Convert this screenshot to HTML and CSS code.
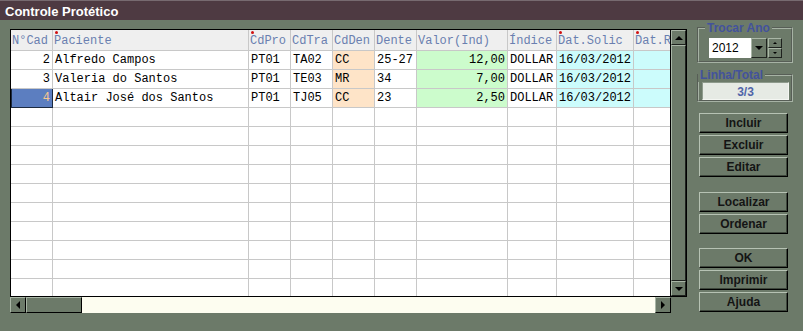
FILE: index.html
```html
<!DOCTYPE html>
<html lang="pt">
<head>
  <meta charset="UTF-8" />
  <title>Controle Protético</title>
  <link rel="stylesheet" href="styles.css">
</head>
<body>
  <div class="window">
    <div class="titlebar">Controle Protético</div>
    <div class="main">
      <div class="grid-area">
        <div class="grid-row">
          <div class="table-wrap">
            <div class="row head">
              <div class="cell">N°Cad</div>
              <div class="cell req">Paciente</div>
              <div class="cell req">CdPro</div>
              <div class="cell">CdTra</div>
              <div class="cell">CdDen</div>
              <div class="cell">Dente</div>
              <div class="cell">Valor(Ind)</div>
              <div class="cell">Índice</div>
              <div class="cell req">Dat.Solic</div>
              <div class="cell req">Dat.Ret</div>
            </div>
            <div class="row">
              <div class="cell num">2</div>
              <div class="cell">Alfredo Campos</div>
              <div class="cell">PT01</div>
              <div class="cell">TA02</div>
              <div class="cell peach">CC</div>
              <div class="cell">25-27</div>
              <div class="cell num green">12,00</div>
              <div class="cell">DOLLAR</div>
              <div class="cell cyan">16/03/2012</div>
              <div class="cell cyan"></div>
            </div>
            <div class="row">
              <div class="cell num">3</div>
              <div class="cell">Valeria do Santos</div>
              <div class="cell">PT01</div>
              <div class="cell">TE03</div>
              <div class="cell peach">MR</div>
              <div class="cell">34</div>
              <div class="cell num green">7,00</div>
              <div class="cell">DOLLAR</div>
              <div class="cell cyan">16/03/2012</div>
              <div class="cell cyan"></div>
            </div>
            <div class="row">
              <div class="cell num selected">4</div>
              <div class="cell">Altair José dos Santos</div>
              <div class="cell">PT01</div>
              <div class="cell">TJ05</div>
              <div class="cell peach">CC</div>
              <div class="cell">23</div>
              <div class="cell num green">2,50</div>
              <div class="cell">DOLLAR</div>
              <div class="cell cyan">16/03/2012</div>
              <div class="cell cyan"></div>
            </div>
            <div class="row"><div class="cell"></div><div class="cell"></div><div class="cell"></div><div class="cell"></div><div class="cell"></div><div class="cell"></div><div class="cell"></div><div class="cell"></div><div class="cell"></div><div class="cell"></div></div>
            <div class="row"><div class="cell"></div><div class="cell"></div><div class="cell"></div><div class="cell"></div><div class="cell"></div><div class="cell"></div><div class="cell"></div><div class="cell"></div><div class="cell"></div><div class="cell"></div></div>
            <div class="row"><div class="cell"></div><div class="cell"></div><div class="cell"></div><div class="cell"></div><div class="cell"></div><div class="cell"></div><div class="cell"></div><div class="cell"></div><div class="cell"></div><div class="cell"></div></div>
            <div class="row"><div class="cell"></div><div class="cell"></div><div class="cell"></div><div class="cell"></div><div class="cell"></div><div class="cell"></div><div class="cell"></div><div class="cell"></div><div class="cell"></div><div class="cell"></div></div>
            <div class="row"><div class="cell"></div><div class="cell"></div><div class="cell"></div><div class="cell"></div><div class="cell"></div><div class="cell"></div><div class="cell"></div><div class="cell"></div><div class="cell"></div><div class="cell"></div></div>
            <div class="row"><div class="cell"></div><div class="cell"></div><div class="cell"></div><div class="cell"></div><div class="cell"></div><div class="cell"></div><div class="cell"></div><div class="cell"></div><div class="cell"></div><div class="cell"></div></div>
            <div class="row"><div class="cell"></div><div class="cell"></div><div class="cell"></div><div class="cell"></div><div class="cell"></div><div class="cell"></div><div class="cell"></div><div class="cell"></div><div class="cell"></div><div class="cell"></div></div>
            <div class="row"><div class="cell"></div><div class="cell"></div><div class="cell"></div><div class="cell"></div><div class="cell"></div><div class="cell"></div><div class="cell"></div><div class="cell"></div><div class="cell"></div><div class="cell"></div></div>
            <div class="row"><div class="cell"></div><div class="cell"></div><div class="cell"></div><div class="cell"></div><div class="cell"></div><div class="cell"></div><div class="cell"></div><div class="cell"></div><div class="cell"></div><div class="cell"></div></div>
            <div class="row"><div class="cell"></div><div class="cell"></div><div class="cell"></div><div class="cell"></div><div class="cell"></div><div class="cell"></div><div class="cell"></div><div class="cell"></div><div class="cell"></div><div class="cell"></div></div>
            <div class="row"><div class="cell"></div><div class="cell"></div><div class="cell"></div><div class="cell"></div><div class="cell"></div><div class="cell"></div><div class="cell"></div><div class="cell"></div><div class="cell"></div><div class="cell"></div></div>
          </div>
          <div class="vscroll">
            <div class="sbtn"><span class="arrow up"></span></div>
            <div class="thumb"></div>
            <div class="sbtn"><span class="arrow down"></span></div>
          </div>
        </div>
        <div class="hscroll">
          <div class="sbtn"><span class="arrow left"></span></div>
          <div class="hthumb"></div>
          <div class="track"></div>
          <div class="sbtn"><span class="arrow right"></span></div>
        </div>
      </div>

      <div class="panel">
        <fieldset class="group">
          <legend>Trocar Ano</legend>
          <div class="year-row">
            <div class="combo">2012</div>
            <div class="combo-btn"><span class="arrow down"></span></div>
            <div class="spin">
              <div class="spin-btn"><span class="arrow tiny-up"></span></div>
              <div class="spin-btn"><span class="arrow tiny-down"></span></div>
            </div>
          </div>
        </fieldset>
        <fieldset class="group total">
          <legend>Linha/Total</legend>
          <div class="counter">3/3</div>
        </fieldset>
        <div class="buttons first">
          <button class="btn">Incluir</button>
          <button class="btn">Excluir</button>
          <button class="btn">Editar</button>
        </div>
        <div class="buttons second">
          <button class="btn">Localizar</button>
          <button class="btn">Ordenar</button>
        </div>
        <div class="buttons">
          <button class="btn">OK</button>
          <button class="btn">Imprimir</button>
          <button class="btn">Ajuda</button>
        </div>
      </div>
    </div>
  </div>
</body>
</html>
```

FILE: styles.css
```css
body {
  margin: 0;
  font-family: "Liberation Sans", Arial, sans-serif;
  background-color: #6c7a69;
  width: 803px;
  height: 331px;
  overflow: hidden;
}
.window {
  display: flex;
  flex-direction: column;
  height: 331px;
}
.titlebar {
  height: 20px;
  line-height: 21px;
  background-color: #4e3a42;
  border-top: 1px solid #776a70;
  box-sizing: border-box;
  color: #fff;
  font-weight: bold;
  font-size: 13px;
  padding-left: 5px;
}
.main {
  display: flex;
  gap: 10px;
  padding: 1px 0 0 10px;
}
.grid-area {
  margin-top: 8px;
  width: 677px;
}
.grid-row {
  display: flex;
  height: 268px;
}
.table-wrap {
  width: 661px;
  height: 268px;
  border: 1px solid #000;
  box-sizing: border-box;
  background-color: #fff;
  overflow: hidden;
}
.row {
  display: grid;
  grid-template-columns: 42px 196px 42px 42px 42px 42px 91px 49px 77px 77px;
  height: 19px;
  font-family: "Liberation Mono", "Courier New", monospace;
  font-size: 12px;
  color: #000;
}
.row.head {
  height: 21px;
  background-color: #efefef;
  color: #6a7fb0;
}
.cell {
  position: relative;
  box-sizing: border-box;
  border-right: 1px solid #c8c8c8;
  border-bottom: 1px solid #c8c8c8;
  padding: 0 2px;
  line-height: 19px;
  white-space: nowrap;
  overflow: hidden;
}
.head .cell {
  line-height: 22px;
  padding-left: 1px;
}
.req::before {
  content: "";
  position: absolute;
  left: 2px;
  top: 1px;
  width: 3px;
  height: 3px;
  border-radius: 50%;
  background-color: #d01010;
}
.num { text-align: right; }
.peach { background-color: #fee4c8; }
.green { background-color: #ccfccc; }
.cyan { background-color: #ccfcfc; }
.selected {
  background-color: #5c7ec0;
  color: #f6c890;
  border: 1px solid #1c2a40;
  border-top: none;
  line-height: 18px;
}

.vscroll {
  width: 16px;
  height: 268px;
  box-sizing: border-box;
  border: 1px solid #000;
  border-left: none;
  display: flex;
  flex-direction: column;
  background-color: #6c7a69;
}
.sbtn {
  width: 15px;
  height: 15px;
  box-sizing: border-box;
  background-color: #6c7a69;
  border: 1px solid;
  border-color: #a9b6a6 #1e221e #1e221e #a9b6a6;
  display: flex;
  align-items: center;
  justify-content: center;
  flex-shrink: 0;
}
.thumb {
  flex: 1;
  border: 1px solid;
  border-color: #a9b6a6 #1e221e #1e221e #a9b6a6;
}
.hscroll {
  display: flex;
  width: 661px;
  height: 16px;
  background-color: #fdfdf0;
}
.hscroll .sbtn {
  width: 16px;
  height: 16px;
  border-color: #a9b6a6 #000 #000 #a9b6a6;
}
.hthumb {
  width: 56px;
  background-color: #6c7a69;
  border: 1px solid;
  border-color: #a9b6a6 #000 #000 #a9b6a6;
  box-sizing: border-box;
}
.track { flex: 1; }

.arrow {
  width: 0;
  height: 0;
  border: 4px solid transparent;
}
.arrow.up { border-bottom-color: #000; border-top-width: 0; }
.arrow.down { border-top-color: #000; border-bottom-width: 0; }
.arrow.left { border-right-color: #000; border-left-width: 0; }
.arrow.right { border-left-color: #000; border-right-width: 0; }
.arrow.tiny-up { border-width: 0 2px 2px; border-bottom-color: #000; }
.arrow.tiny-down { border-width: 2px 2px 0; border-top-color: #000; }

.panel {
  width: 96px;
  display: flex;
  flex-direction: column;
}
.group {
  margin: 0;
  padding: 3px 8px 3px 10px;
  border: 2px groove #a6b2a4;
}
.group legend {
  margin-left: -4px;
  padding: 0 2px;
  color: #43529c;
  font-weight: bold;
  font-size: 12px;
  line-height: 14px;
}
.year-row {
  display: flex;
  height: 20px;
}
.combo {
  width: 42px;
  background-color: #fff;
  font-size: 12px;
  line-height: 21px;
  padding-left: 3px;
  box-sizing: border-box;
}
.combo-btn {
  width: 16px;
  box-sizing: border-box;
  border: 1px solid;
  border-color: #a9b6a6 #1e221e #1e221e #a9b6a6;
  display: flex;
  align-items: center;
  justify-content: center;
}
.spin {
  margin-left: 1px;
  width: 14px;
  display: flex;
  flex-direction: column;
}
.spin-btn {
  flex: 1;
  box-sizing: border-box;
  border: 1px solid;
  border-color: #a9b6a6 #1e221e #1e221e #a9b6a6;
  display: flex;
  align-items: center;
  justify-content: center;
}
.group.total {
  margin-top: 5px;
  padding: 0 2px 0 3px;
}
.counter {
  height: 18px;
  line-height: 18px;
  background-color: #e6eae4;
  border: 1px solid;
  border-color: #8e9a8c #f4f6f2 #f4f6f2 #8e9a8c;
  box-sizing: border-box;
  text-align: center;
  color: #5064a8;
  font-weight: bold;
  font-size: 12px;
}
.buttons {
  display: flex;
  flex-direction: column;
  gap: 2px;
  padding-left: 2px;
  margin-top: 14px;
}
.buttons.first { margin-top: 11px; }
.buttons.second { margin-top: 15px; }
.btn {
  width: 89px;
  height: 20px;
  padding: 0;
  background-color: #6c7a69;
  border: 1px solid;
  border-color: #b6c2b3 #000 #000 #b6c2b3;
  box-shadow: inset -1px -1px #3e473c;
  font-family: "Liberation Sans", Arial, sans-serif;
  font-weight: bold;
  font-size: 12px;
  color: #141414;
}
```
